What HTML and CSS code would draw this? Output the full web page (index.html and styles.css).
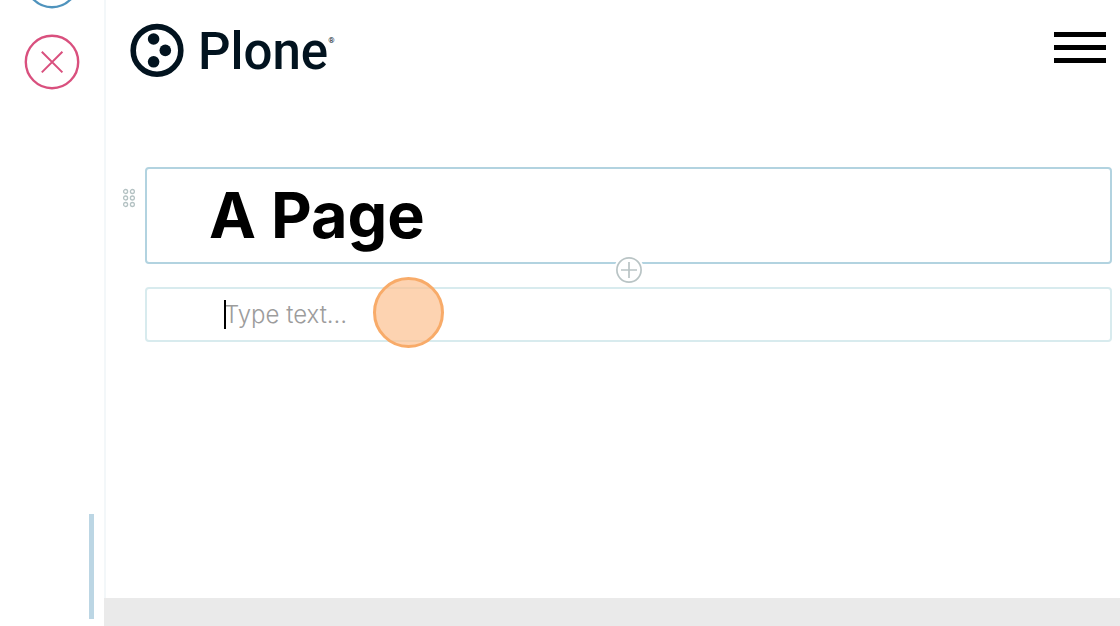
FILE: index.html
```html
<!DOCTYPE html>
<html lang="en">
<head>
<meta charset="utf-8">
<meta name="viewport" content="width=device-width, initial-scale=1">
<title>A Page</title>
<link rel="stylesheet" href="styles.css">
</head>
<body class="app">
  <aside class="toolbar">
    <button class="tool tool-save" type="button" aria-label="Save">
      <svg viewBox="0 0 56 56" fill="none" stroke="currentColor" stroke-width="2.4"><circle cx="28" cy="28" r="26.2"/></svg>
    </button>
    <button class="tool tool-cancel" type="button" aria-label="Cancel">
      <svg viewBox="0 0 56 56" fill="none" stroke="currentColor"><circle cx="28" cy="28" r="26.2" stroke-width="2.4"/><path d="M17.8 17.8 38.4 38.4M38.4 17.8 17.8 38.4" stroke-width="2"/></svg>
    </button>
    <button class="expander" type="button" aria-label="Shrink toolbar"></button>
  </aside>
  <div class="page">
    <header class="header">
      <a class="logo" href="#">
        <svg class="logo-mark" viewBox="0 0 54 54" fill="#02131f"><circle cx="27" cy="27.4" r="23.8" fill="none" stroke="#02131f" stroke-width="5.6"/><circle cx="23.6" cy="16" r="5.8"/><circle cx="35.3" cy="27.4" r="5.8"/><circle cx="23.6" cy="38.8" r="5.8"/></svg>
        <span class="logo-name">Plone</span><span class="logo-reg">®</span>
      </a>
      <button class="menu" type="button" aria-label="Open menu">
        <svg viewBox="0 0 52 32"><path d="M0 0h52v5H0zM0 13h52v5H0zM0 26h52v5H0z"/></svg>
      </button>
    </header>
    <main class="editor">
      <section class="block block-title">
        <button class="drag" type="button" aria-label="Drag block">
          <svg viewBox="0 0 12 20" fill="none" stroke="#b4c2c3" stroke-width="1.3"><circle cx="2.6" cy="3.5" r="2"/><circle cx="9.4" cy="3.5" r="2"/><circle cx="2.6" cy="10" r="2"/><circle cx="9.4" cy="10" r="2"/><circle cx="2.6" cy="16.5" r="2"/><circle cx="9.4" cy="16.5" r="2"/></svg>
        </button>
        <h1 class="title">A Page</h1>
        <button class="add" type="button" aria-label="Add block">
          <svg viewBox="0 0 26 26" fill="none" stroke="#b9c4c5" stroke-width="1.7"><circle cx="13" cy="13" r="12.1"/><path d="M5 13h16M13 5v16"/></svg>
        </button>
      </section>
      <section class="block block-text">
        <input class="text-input" type="text" placeholder="Type text…" aria-label="Text">
        <span class="caret"></span>
        <span class="pointer"></span>
      </section>
    </main>
    <footer class="footer"></footer>
  </div>
</body>
</html>
```
FILE: styles.css
```css
* {
  box-sizing: border-box;
}

.app {
  margin: 0;
  display: flex;
  min-height: 100vh;
  background: #fff;
  color: #000;
  font-family: Inter, "Liberation Sans", sans-serif;
  overflow: hidden;
}

button {
  padding: 0;
  border: 0;
  background: none;
  cursor: pointer;
}

svg {
  display: block;
  width: 100%;
}

.toolbar {
  flex: 0 0 104px;
  display: flex;
  flex-direction: column;
  align-items: center;
  gap: 25px;
  margin-top: -47px;
  padding-bottom: 7px;
  box-shadow: 2px 0 #f3f7f9;
}

.tool {
  width: 56px;
  height: 56px;
}

.tool-save {
  color: #4f93bd;
}

.tool-cancel {
  color: #d9507e;
}

.expander {
  width: 5px;
  height: 105px;
  margin: auto 10px 0 0;
  align-self: flex-end;
  background: #bcd6e4;
}

.page {
  flex: 1;
  min-width: 0;
  display: flex;
  flex-direction: column;
}

.header {
  display: flex;
  justify-content: space-between;
  align-items: flex-start;
  padding: 23px 14px 0 26px;
}

.logo {
  display: flex;
  color: #02131f;
  text-decoration: none;
}

.logo-mark {
  width: 54px;
  height: 54px;
}

.logo-name {
  margin-left: 14px;
  font: 500 51px/58px Roboto, sans-serif;
}

.logo-reg {
  margin-top: 13px;
  font: 8px/9px Roboto, sans-serif;
}

.menu {
  width: 52px;
  margin-top: 9px;
}

.editor {
  flex: 1;
  display: flex;
  flex-direction: column;
  gap: 23px;
  padding: 86px 8px 80px 41px;
}

.block {
  position: relative;
  border: 2px solid #b2d3e0;
  border-radius: 4px;
}

.block-title {
  padding: 8px 62px;
}

.title {
  margin: 0;
  font-size: 63px;
  font-weight: 700;
  line-height: 77px;
}

.drag {
  position: absolute;
  left: -24px;
  top: 19px;
  width: 12px;
}

.add {
  position: absolute;
  left: 50%;
  bottom: -21px;
  width: 26px;
  margin-left: -13px;
  border-radius: 50%;
  background: #fff;
  box-shadow: 0 0 0 2px #fff;
}

.block-text {
  border-color: #d8ebee;
}

.text-input {
  display: block;
  width: 100%;
  padding: 0 77px;
  border: 0;
  outline: 0;
  background: none;
  font: 300 24px/51px Inter, sans-serif;
  height: 51px;
}

.text-input::placeholder {
  color: #9c9c9c;
  opacity: 1;
}

.caret {
  position: absolute;
  left: 77px;
  top: 11px;
  width: 2px;
  height: 29px;
  background: #000;
}

.pointer {
  position: absolute;
  left: 226px;
  top: -12px;
  width: 71px;
  height: 71px;
  border: 3px solid #f8ab69;
  border-radius: 50%;
  background: rgba(252, 190, 140, 0.68);
  pointer-events: none;
}

.footer {
  min-height: 28px;
  background: #eaeaea;
}
```
